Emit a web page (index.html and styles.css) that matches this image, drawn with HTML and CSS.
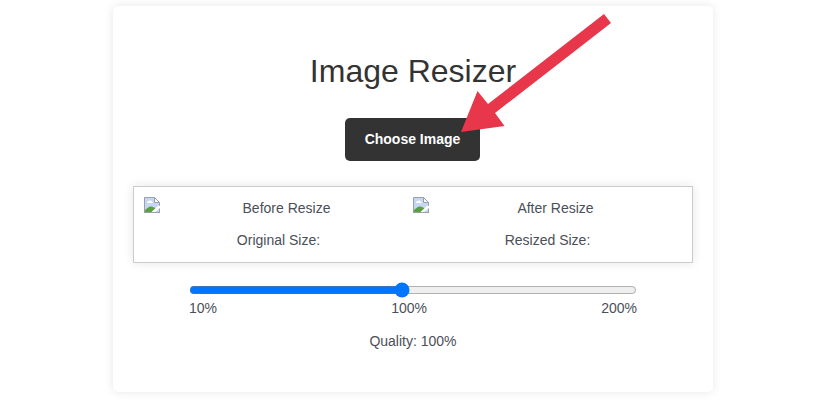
FILE: index.html
```html
<!DOCTYPE html>
<html lang="en">
<head>
<meta charset="utf-8">
<title>Image Resizer</title>
<link rel="stylesheet" href="styles.css">
</head>
<body>
<main class="card">
  <h1 class="title">Image Resizer</h1>
  <button class="choose" type="button">Choose Image</button>
  <section class="previews">
    <div class="preview">
      <div class="picture">
        <svg class="broken" viewBox="0 0 16 16"><use href="#broken-image"/></svg>
        <span class="alt">Before Resize</span>
      </div>
      <p class="size">Original Size:</p>
    </div>
    <div class="preview">
      <div class="picture">
        <svg class="broken" viewBox="0 0 16 16"><use href="#broken-image"/></svg>
        <span class="alt">After Resize</span>
      </div>
      <p class="size">Resized Size:</p>
    </div>
  </section>
  <div class="slider">
    <input class="range" type="range" min="10" max="200" value="100" aria-label="Quality">
    <div class="labels"><span>10%</span><span>100%</span><span>200%</span></div>
  </div>
  <p class="quality">Quality: 100%</p>
</main>
<svg class="arrow" viewBox="0 0 151 119"><path d="M1 118 17.500 77 28 90 144 0 151 9 35 99 44.500 112Z"/></svg>
<svg class="defs" aria-hidden="true">
  <symbol id="broken-image" viewBox="0 0 16 16">
    <path fill="#c6d6f3" d="M.5.5h10l5 5v10H.5z"/>
    <path fill="#fff" d="M10.500.5l5 5h-5zM3 6c0-1.500 1-2 2-2 1-1.200 3-.5 3 1 1 0 1.500 1 .5 1z"/>
    <path fill="#5ba03e" d="M1 15v-2c2-1.500 3.500-3.500 6-3.500 2 0 3.500 1 4.500 2L8 15z"/>
    <path fill="none" stroke="#98a0a8" d="M.5 16V.5h10l5 5V16M0 15.500h16M10.500.5v5h5"/>
    <path fill="#fff" d="M7.500 15 14.500 8.500 16 9v2L11 15z"/>
  </symbol>
</svg>
</body>
</html>
```
FILE: styles.css
```css
* { box-sizing: border-box; }
body {
  margin: 0;
  height: 410px;
  overflow: hidden;
  background: #fff;
  color: #4b4f58;
  font: 14px/24px "Liberation Sans", Arial, sans-serif;
}
.card {
  display: flex;
  flex-direction: column;
  align-items: center;
  width: 600px;
  height: 386px;
  margin: 6px 0 0 113px;
  padding: 44px 20px 20px;
  border-radius: 5px;
  background: #fff;
  box-shadow: 0 0 10px rgba(0, 0, 0, .1);
}
.title {
  margin: 0 0 26px;
  color: #333;
  font-size: 32px;
  font-weight: 400;
  line-height: 42px;
}
.choose {
  flex: none;
  width: 135px;
  height: 43px;
  margin: 0 1px 25px 0;
  padding: 0 0 2px;
  border: 0;
  border-radius: 5px;
  background: #333;
  color: #fff;
  font: bold 14px "Liberation Sans", Arial, sans-serif;
}
.previews {
  display: grid;
  grid-template-columns: 1fr 1fr;
  width: 560px;
  height: 77px;
  padding: 10px;
  border: 1px solid #ccc;
  box-shadow: 0 0 10px rgba(0, 0, 0, .1);
}
.preview { text-align: center; }
.picture { display: flex; height: 23px; line-height: 22px; }
.broken { flex: none; width: 16px; height: 16px; }
.alt { flex: 1; }
.size { margin: 8px 0 0; }
.slider { width: 448px; margin-top: 19px; }
.range { display: block; width: 100%; height: 16px; margin: 0; }
.labels { display: flex; justify-content: space-between; margin-top: -2px; }
.quality { margin: 9px 0 0; }
.arrow {
  position: absolute;
  left: 460px;
  top: 14px;
  width: 151px;
  height: 119px;
  fill: #e8364b;
}
.defs { position: absolute; width: 0; height: 0; }
```
